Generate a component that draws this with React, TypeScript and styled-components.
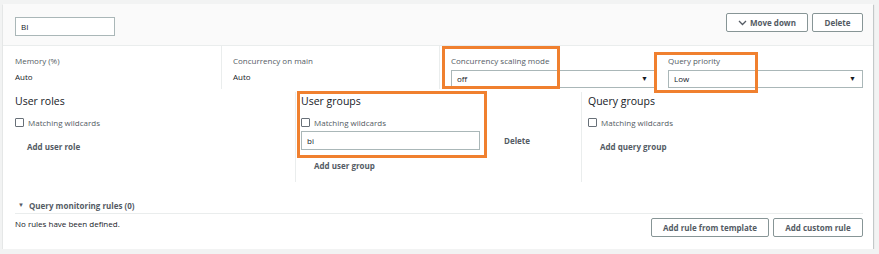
import React from "react";
import styled, { createGlobalStyle } from "styled-components";

const GlobalStyle = createGlobalStyle`
    body {
        margin: 0;
        background: #f2f3f3;
        font-family: "Open Sans", "Liberation Sans", sans-serif;
        color: #16191f;
    }
`;

const Card = styled.div`
    margin: 4px 6px 0 3px;
    height: 245px;
    background: #fff;
    box-shadow: 0 1px 1px 0 rgba(0, 28, 36, 0.3), 1px 1px 1px 0 rgba(0, 28, 36, 0.15);
    display: flex;
    flex-direction: column;
`;

const Header = styled.div`
    height: 42px;
    box-sizing: border-box;
    background: #fafafa;
    border-bottom: 1px solid #eaeded;
    padding: 0 10px 0 12px;
    display: flex;
    justify-content: space-between;
    align-items: flex-start;
`;

const NameInput = styled.div`
    margin-top: 13px;
    width: 100px;
    height: 19px;
    box-sizing: border-box;
    border: 1px solid #aab7b8;
    background: #fff;
    font-size: 8px;
    line-height: 17px;
    padding-left: 5px;
`;

const ButtonRow = styled.div<{ top?: number }>`
    margin-top: ${({ top }) => top ?? 9}px;
    display: flex;
    gap: 4px;
`;

const Button = styled.button<{ w: number }>`
    width: ${({ w }) => w}px;
    height: 19px;
    box-sizing: border-box;
    border: 1px solid #879596;
    border-radius: 2px;
    background: #fff;
    color: #545b64;
    font-family: "Open Sans", "Liberation Sans", sans-serif;
    font-size: 8px;
    font-weight: 700;
    padding: 0;
    display: flex;
    align-items: center;
    justify-content: center;
    gap: 3px;
`;

const Body = styled.div`
    padding: 0 10px 0 12px;
    display: flex;
    flex-direction: column;
    flex: 1;
`;

const SettingsRow = styled.div`
    display: grid;
    grid-template-columns: 206px 218px 216px 1fr;
    height: 46px;
`;

const SettingCol = styled.div<{ divider?: boolean; pad?: number }>`
    position: relative;
    padding-left: ${({ pad }) => pad ?? 0}px;
    padding-top: 9px;
    border-left: ${({ divider }) => (divider ? "1px solid #eaeded" : "none")};
    margin-bottom: 3px;
`;

const Label = styled.div`
    font-size: 8px;
    color: #545b64;
    line-height: 11px;
`;

const Value = styled.div`
    font-size: 8px;
    line-height: 11px;
    margin-top: 5px;
`;

const Select = styled.div`
    margin-top: 4px;
    height: 18px;
    box-sizing: border-box;
    border: 1px solid #aab7b8;
    font-size: 8px;
    line-height: 16px;
    padding: 0 6px 0 5px;
    display: flex;
    justify-content: space-between;
    align-items: center;
`;

const Caret = styled.span`
    font-size: 7px;
    color: #16191f;
`;

const Highlight = styled.div<{ t: number; l: number; w: number; h: number }>`
    position: absolute;
    top: ${({ t }) => t}px;
    left: ${({ l }) => l}px;
    width: ${({ w }) => w}px;
    height: ${({ h }) => h}px;
    border: 3px solid #f0802f;
    box-sizing: border-box;
    pointer-events: none;
`;

const GroupsRow = styled.div`
    display: grid;
    grid-template-columns: 280px 286px 1fr;
    height: 90px;
`;

const GroupCol = styled.div<{ divider?: boolean; pad?: number }>`
    position: relative;
    padding-left: ${({ pad }) => pad ?? 0}px;
    border-left: ${({ divider }) => (divider ? "1px solid #eaeded" : "none")};
    padding-top: 2px;
`;

const GroupTitle = styled.div`
    font-size: 10.5px;
    line-height: 14px;
    color: #16191f;
`;

const CheckRow = styled.label`
    display: flex;
    align-items: center;
    gap: 4px;
    margin-top: 9px;
    font-size: 8px;
    color: #545b64;
    line-height: 11px;
`;

const Checkbox = styled.span`
    width: 9px;
    height: 9px;
    box-sizing: border-box;
    border: 1px solid #687078;
    border-radius: 1px;
    background: #fff;
`;

const LinkButton = styled.div<{ indent: number; top: number }>`
    margin-left: ${({ indent }) => indent}px;
    margin-top: ${({ top }) => top}px;
    font-size: 8px;
    font-weight: 700;
    color: #545b64;
    line-height: 11px;
`;

const EntryRow = styled.div`
    display: flex;
    align-items: center;
    margin-top: 3px;
`;

const EntryInput = styled.div`
    width: 179px;
    height: 19px;
    box-sizing: border-box;
    border: 1px solid #aab7b8;
    font-size: 8px;
    line-height: 17px;
    padding-left: 5px;
`;

const RulesHeader = styled.div`
    margin-top: 15px;
    height: 16px;
    border-bottom: 1px solid #eaeded;
    display: flex;
    align-items: center;
    gap: 5px;
    padding-left: 3px;
    font-size: 8px;
    font-weight: 700;
    color: #545b64;
`;

const SmallCaret = styled.span`
    font-size: 6px;
    color: #545b64;
`;

const RulesFooter = styled.div`
    display: flex;
    justify-content: space-between;
    align-items: flex-start;
    padding-top: 4px;
`;

const EmptyText = styled.div`
    font-size: 8px;
    color: #16191f;
    margin-top: 0;
    line-height: 11px;
`;

const App: React.FC = () => {
    return (
        <>
            <GlobalStyle />
            <Card>
                <Header>
                    <NameInput>BI</NameInput>
                    <ButtonRow>
                        <Button w={82}>
                            <svg width="9" height="6" viewBox="0 0 9 6">
                                <path d="M1 1 L4.5 4.5 L8 1" fill="none" stroke="#545b64" strokeWidth="1.3" />
                            </svg>
                            Move down
                        </Button>
                        <Button w={51}>Delete</Button>
                    </ButtonRow>
                </Header>
                <Body>
                    <SettingsRow>
                        <SettingCol>
                            <Label>Memory (%)</Label>
                            <Value>Auto</Value>
                        </SettingCol>
                        <SettingCol divider pad={11}>
                            <Label>Concurrency on main</Label>
                            <Value>Auto</Value>
                        </SettingCol>
                        <SettingCol divider pad={11}>
                            <Label>Concurrency scaling mode</Label>
                            <Select>
                                off <Caret>▼</Caret>
                            </Select>
                            <Highlight t={0} l={2} w={118} h={43} />
                        </SettingCol>
                        <SettingCol pad={13}>
                            <Label>Query priority</Label>
                            <Select>
                                Low <Caret>▼</Caret>
                            </Select>
                            <Highlight t={6} l={-1} w={104} h={41} />
                        </SettingCol>
                    </SettingsRow>
                    <GroupsRow>
                        <GroupCol>
                            <GroupTitle>User roles</GroupTitle>
                            <CheckRow>
                                <Checkbox />
                                Matching wildcards
                            </CheckRow>
                            <LinkButton indent={12} top={13}>Add user role</LinkButton>
                        </GroupCol>
                        <GroupCol divider pad={5}>
                            <GroupTitle>User groups</GroupTitle>
                            <CheckRow>
                                <Checkbox />
                                Matching wildcards
                            </CheckRow>
                            <EntryRow>
                                <EntryInput>bi</EntryInput>
                                <LinkButton indent={24} top={0}>Delete</LinkButton>
                            </EntryRow>
                            <LinkButton indent={13} top={10}>Add user group</LinkButton>
                            <Highlight t={-1} l={1} w={190} h={67} />
                        </GroupCol>
                        <GroupCol divider pad={6}>
                            <GroupTitle>Query groups</GroupTitle>
                            <CheckRow>
                                <Checkbox />
                                Matching wildcards
                            </CheckRow>
                            <LinkButton indent={12} top={13}>Add query group</LinkButton>
                        </GroupCol>
                    </GroupsRow>
                    <RulesHeader>
                        <SmallCaret>▼</SmallCaret>
                        Query monitoring rules (0)
                    </RulesHeader>
                    <RulesFooter>
                        <EmptyText>No rules have been defined.</EmptyText>
                        <ButtonRow top={0}>
                            <Button w={118}>Add rule from template</Button>
                            <Button w={90}>Add custom rule</Button>
                        </ButtonRow>
                    </RulesFooter>
                </Body>
            </Card>
        </>
    );
};

export default App;
